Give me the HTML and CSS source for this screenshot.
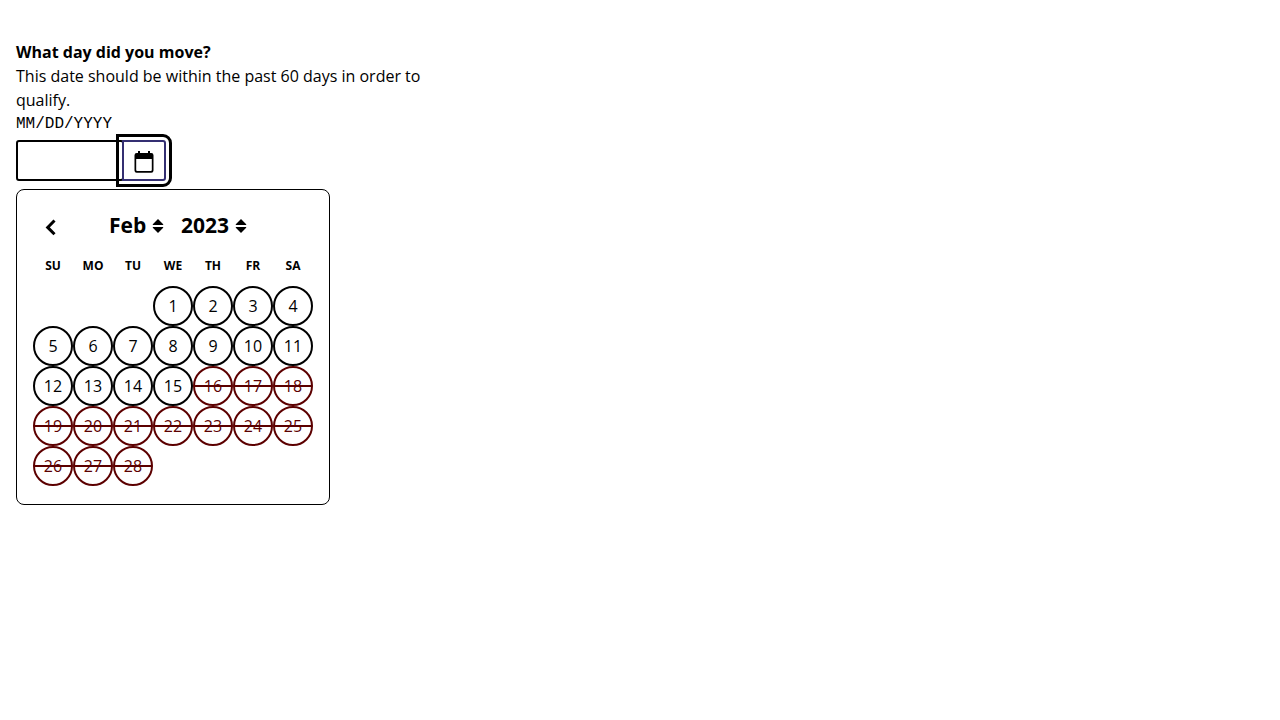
FILE: index.html
```html
<!DOCTYPE html>
<html lang="en">
<head>
<meta charset="utf-8">
<title>Move date</title>
<meta name="viewport" content="width=device-width, initial-scale=1">
<link rel="stylesheet" href="styles.css">
</head>
<body>
<main class="field">
  <label class="label" for="move-date">What day did you move?</label>
  <div class="hint" id="hint">This date should be within the past 60 days in order to qualify.</div>
  <div class="format" id="format">MM/DD/YYYY</div>
  <div class="control">
    <input class="date-input" id="move-date" type="text" aria-describedby="hint format">
    <button class="toggle" type="button" aria-label="Close calendar" aria-expanded="true">
      <svg class="toggle-icon" viewBox="0 0 20 22" aria-hidden="true"><path fill-rule="evenodd" d="M4 0h2v2h8V0h2v2h1.300A2.200 2.200 0 0 1 19.500 4.200v15.300a2.200 2.200 0 0 1-2.200 2.200H2.700A2.200 2.200 0 0 1 .5 19.500V4.200A2.200 2.200 0 0 1 2.700 2H4zM2.200 8v11a1 1 0 0 0 1 1h13.600a1 1 0 0 0 1-1V8z"/></svg>
    </button>
  </div>
  <div class="calendar" role="dialog" aria-label="Calendar">
    <div class="nav">
      <button class="prev" type="button" aria-label="Previous month">
        <svg class="prev-icon" viewBox="0 0 12 18" aria-hidden="true"><path d="M10.500 2.500 3.700 9.400l6.800 6.900" fill="none" stroke="#000" stroke-width="3"/></svg>
      </button>
      <div class="pickers">
        <span class="picker">
          <select class="select month" aria-label="Month"><option>Feb</option></select>
          <svg class="sort" viewBox="0 0 12 16" aria-hidden="true"><path d="M6 1l5.200 5.200a.5.5 0 0 1-.4.8H1.200a.5.5 0 0 1-.4-.8zM6 15l5.200-5.200a.5.5 0 0 0-.4-.8H1.200a.5.5 0 0 0-.4.8z"/></svg>
        </span>
        <span class="picker">
          <select class="select year" aria-label="Year"><option>2023</option></select>
          <svg class="sort" viewBox="0 0 12 16" aria-hidden="true"><path d="M6 1l5.200 5.200a.5.5 0 0 1-.4.8H1.200a.5.5 0 0 1-.4-.8zM6 15l5.200-5.200a.5.5 0 0 0-.4-.8H1.200a.5.5 0 0 0-.4.8z"/></svg>
        </span>
      </div>
    </div>
    <table class="days">
      <thead><tr><th>SU</th><th>MO</th><th>TU</th><th>WE</th><th>TH</th><th>FR</th><th>SA</th></tr></thead>
      <tbody>
        <tr><td></td><td></td><td></td><td><button class="day">1</button></td><td><button class="day">2</button></td><td><button class="day">3</button></td><td><button class="day">4</button></td></tr>
        <tr><td><button class="day">5</button></td><td><button class="day">6</button></td><td><button class="day">7</button></td><td><button class="day">8</button></td><td><button class="day">9</button></td><td><button class="day">10</button></td><td><button class="day">11</button></td></tr>
        <tr><td><button class="day">12</button></td><td><button class="day">13</button></td><td><button class="day">14</button></td><td><button class="day">15</button></td><td><button class="day" disabled>16</button></td><td><button class="day" disabled>17</button></td><td><button class="day" disabled>18</button></td></tr>
        <tr><td><button class="day" disabled>19</button></td><td><button class="day" disabled>20</button></td><td><button class="day" disabled>21</button></td><td><button class="day" disabled>22</button></td><td><button class="day" disabled>23</button></td><td><button class="day" disabled>24</button></td><td><button class="day" disabled>25</button></td></tr>
        <tr><td><button class="day" disabled>26</button></td><td><button class="day" disabled>27</button></td><td><button class="day" disabled>28</button></td><td></td><td></td><td></td><td></td></tr>
      </tbody>
    </table>
  </div>
</main>
</body>
</html>
```
FILE: styles.css
```css
*, *::before, *::after { box-sizing: border-box; }
body {
  margin: 0;
  padding: 40px 16px 16px;
  background: #fff;
  color: #000;
  font: 16px/24px "Open Sans", sans-serif;
}
button, input, select { margin: 0; padding: 0; color: inherit; font: inherit; }
.field { max-width: 460px; }
.label { display: block; font-weight: 700; }
.hint { max-width: 440px; }
.format { font: 16px/24px "Liberation Mono", monospace; }
.control { display: flex; margin-top: 4px; }
.date-input {
  width: 108px;
  height: 41px;
  padding: 0 8px;
  border: 2px solid #000;
  border-radius: 3px;
  background: #fff;
}
.toggle {
  display: grid;
  place-items: center;
  width: 44px;
  margin-left: -2px;
  border: 2px solid #342f72;
  border-radius: 0 3px 3px 0;
  background: #fff;
  outline: 3px solid #000;
  outline-offset: 3px;
}
.toggle-icon { width: 20px; height: 22px; margin-top: 2px; }
.calendar {
  width: fit-content;
  margin-top: 8px;
  padding: 16px 16px 18px;
  border: 1px solid #000;
  border-radius: 8px;
}
.nav { display: flex; align-items: center; height: 40px; }
.prev {
  display: grid;
  place-items: center;
  width: 34px;
  height: 36px;
  margin-top: 2px;
  border: 0;
  background: none;
}
.prev-icon { width: 12px; height: 18px; }
.pickers { display: flex; gap: 17px; margin-left: 42px; }
.picker { display: grid; align-items: center; }
.select {
  grid-area: 1 / 1;
  padding-bottom: 2px;
  border: 0;
  background: none;
  appearance: none;
  font-size: 21px;
  font-weight: 700;
  line-height: 32px;
}
.month { width: 55px; }
.year { width: 66px; }
.sort {
  grid-area: 1 / 1;
  justify-self: end;
  width: 12px;
  height: 16px;
  pointer-events: none;
}
.days { border-collapse: collapse; }
.days th {
  width: 40px;
  height: 40px;
  padding: 0;
  font-size: 12px;
  line-height: 16px;
}
.days td { width: 40px; height: 40px; padding: 0; }
.day {
  display: block;
  width: 40px;
  height: 40px;
  border: 2px solid #000;
  border-radius: 50%;
  background: none;
}
.day:disabled {
  border-color: #5c0000;
  color: #5c0000;
  background: linear-gradient(#5c0000, #5c0000) center / 100% 2px no-repeat border-box;
}
```
